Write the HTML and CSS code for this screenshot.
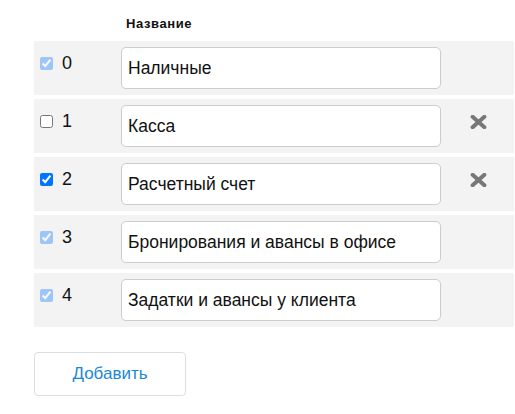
FILE: index.html
```html
<!DOCTYPE html>
<html lang="ru">
<head>
<meta charset="utf-8">
<link rel="stylesheet" href="styles.css">
</head>
<body>
<div class="page">
  <div class="list">
    <div class="head">
      <div></div>
      <div class="head-title">Название</div>
      <div></div>
    </div>
    <div class="row">
      <label class="num"><input class="locked" type="checkbox" checked tabindex="-1"> 0</label>
      <div class="field"><input class="text" type="text" value="Наличные"></div>
      <div class="act"></div>
    </div>
    <div class="row">
      <label class="num"><input type="checkbox"> 1</label>
      <div class="field"><input class="text" type="text" value="Касса"></div>
      <div class="act"><svg class="del" viewBox="0 0 17 14" width="17" height="14"><path d="M2.6 1.8 L14.4 12.2 M14.4 1.8 L2.6 12.2" stroke="#777" stroke-width="4" stroke-linecap="round"/></svg></div>
    </div>
    <div class="row">
      <label class="num"><input type="checkbox" checked> 2</label>
      <div class="field"><input class="text" type="text" value="Расчетный счет"></div>
      <div class="act"><svg class="del" viewBox="0 0 17 14" width="17" height="14"><path d="M2.6 1.8 L14.4 12.2 M14.4 1.8 L2.6 12.2" stroke="#777" stroke-width="4" stroke-linecap="round"/></svg></div>
    </div>
    <div class="row">
      <label class="num"><input class="locked" type="checkbox" checked tabindex="-1"> 3</label>
      <div class="field"><input class="text" type="text" value="Бронирования и авансы в офисе"></div>
      <div class="act"></div>
    </div>
    <div class="row">
      <label class="num"><input class="locked" type="checkbox" checked tabindex="-1"> 4</label>
      <div class="field"><input class="text" type="text" value="Задатки и авансы у клиента"></div>
      <div class="act"></div>
    </div>
  </div>
  <button class="add" type="button">Добавить</button>
</div>
</body>
</html>
```
FILE: styles.css
```css
html, body {
  margin: 0;
  padding: 0;
  background: #fff;
}
body {
  font-family: "Liberation Sans", Arial, sans-serif;
  color: #111;
}
.page {
  padding: 0 1px 0 34px;
}
.list {
  display: flex;
  flex-direction: column;
  gap: 4px;
  width: 480px;
}
.head {
  display: grid;
  grid-template-columns: 87px 320px 1fr;
  height: 37px;
}
.head-title {
  font-family: "Liberation Sans", Arial, sans-serif;
  font-weight: bold;
  font-size: 13px;
  letter-spacing: 0.6px;
  line-height: 15px;
  padding: 16px 0 0 5px;
  color: #111;
}
.row {
  display: grid;
  grid-template-columns: 87px 320px 1fr;
  height: 54px;
  background: #f3f3f3;
}
.num {
  display: flex;
  align-items: center;
  gap: 9px;
  padding: 12px 0 0 6px;
  height: 20px;
  font-size: 18px;
  line-height: 20px;
  color: #111;
}
.num input {
  margin: 0;
  width: 13px;
  height: 13px;
}
.num .locked {
  opacity: 0.35;
  pointer-events: none;
}
.field {
  padding-top: 6px;
}
.text {
  box-sizing: border-box;
  width: 320px;
  height: 42px;
  border: 1px solid #ccc;
  border-radius: 5px;
  padding: 0 6px;
  font-family: "Liberation Sans", Arial, sans-serif;
  font-size: 17.5px;
  color: #111;
  background: #fff;
  outline: none;
}
.act {
  display: flex;
  justify-content: flex-start;
  padding: 16px 0 0 29px;
}
.del {
  display: block;
}
.add {
  margin-top: 25px;
  width: 152px;
  height: 44px;
  background: #fff;
  border: 1px solid #ddd;
  border-radius: 4px;
  font-family: "Liberation Sans", Arial, sans-serif;
  font-size: 17px;
  color: #1a88d3;
  cursor: pointer;
}
```
